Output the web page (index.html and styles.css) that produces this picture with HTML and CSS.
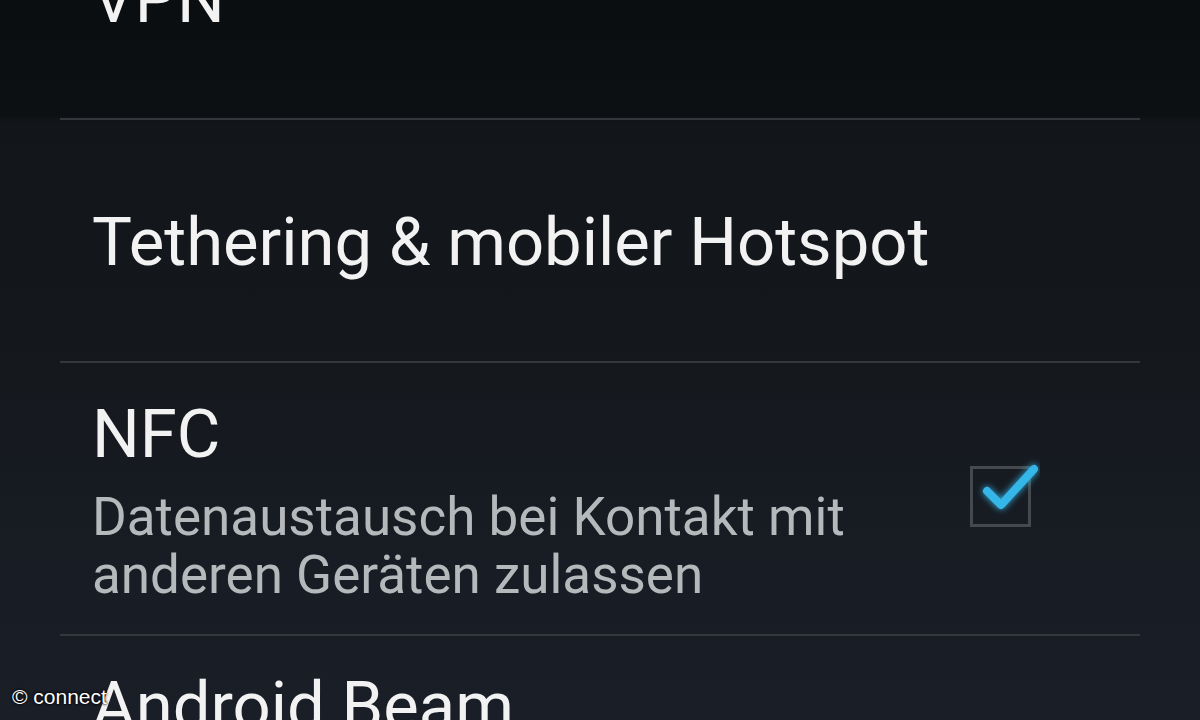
FILE: index.html
```html
<!DOCTYPE html>
<html>
<head>
<meta charset="utf-8">
<link rel="stylesheet" href="styles.css">
</head>
<body>
<div class="screen">
  <ul class="list">
    <li class="row row-vpn"><span class="title">VPN</span></li>
    <li class="divider"></li>
    <li class="row row-tether"><span class="title">Tethering &amp; mobiler Hotspot</span></li>
    <li class="divider"></li>
    <li class="row row-nfc">
      <div class="texts">
        <div class="title">NFC</div>
        <div class="summary">Datenaustausch bei Kontakt mit<br>anderen Geräten zulassen</div>
      </div>
      <div class="checkbox">
        <svg width="80" height="80" viewBox="0 0 80 80">
          <defs>
            <filter id="glow" x="-50%" y="-50%" width="200%" height="200%">
              <feGaussianBlur stdDeviation="3.5" result="b"/>
              <feMerge><feMergeNode in="b"/><feMergeNode in="SourceGraphic"/></feMerge>
            </filter>
          </defs>
          <rect x="11.5" y="18.5" width="58" height="58" fill="none" stroke="#45494d" stroke-width="3"/>
          <path d="M27 42 L41 56 L74 20" fill="none" stroke="#36b6e8" stroke-width="8" stroke-linecap="round" stroke-linejoin="round" filter="url(#glow)"/>
        </svg>
      </div>
    </li>
    <li class="divider"></li>
    <li class="row row-beam"><span class="title">Android Beam</span></li>
  </ul>
  <div class="watermark">© connect</div>
</div>
</body>
</html>
```
FILE: styles.css
```css
html, body {
  margin: 0;
  padding: 0;
}
body {
  width: 1200px;
  height: 720px;
  overflow: hidden;
  background: linear-gradient(180deg, #0b0e11 0%, #0d1013 16%, #12161a 17%, #14181c 45%, #181c24 80%, #1a1e27 100%);
  font-family: Roboto, "Open Sans", sans-serif;
  color: #f2f2f2;
}
.screen {
  position: relative;
  width: 1200px;
  height: 720px;
  overflow: hidden;
}
.list {
  list-style: none;
  margin: -120px 60px 0 60px;
  padding: 0;
  display: flex;
  flex-direction: column;
}
.row {
  display: flex;
  align-items: center;
  padding-left: 32px;
  box-sizing: border-box;
}
.row-vpn {
  height: 238px;
}
.row-tether {
  height: 241px;
  padding-top: 3px;
}
.row-nfc {
  height: 271px;
  justify-content: space-between;
  align-items: flex-start;
  padding-top: 35px;
  padding-right: 100px;
}
.row-beam {
  height: 200px;
  align-items: flex-start;
  padding-top: 34px;
}
.divider {
  height: 2px;
  background: #34383c;
}
.title {
  font-size: 67px;
  line-height: 72px;
  color: #f2f2f2;
}
.summary {
  margin-top: 18px;
  font-size: 53px;
  line-height: 58px;
  color: #b6b9bc;
}
.checkbox {
  display: flex;
  align-self: center;
  margin-top: -54px;
}
.watermark {
  position: absolute;
  left: 12px;
  top: 685px;
  font-family: "Liberation Sans", Arial, sans-serif;
  font-size: 21px;
  color: #ffffff;
  text-shadow: 0 0 2px #000, 0 0 3px #000;
}
```
